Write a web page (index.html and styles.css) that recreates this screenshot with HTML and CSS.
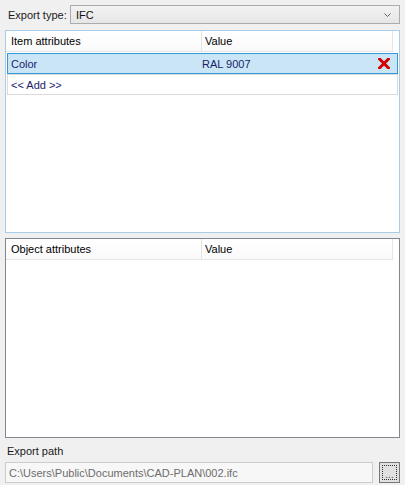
FILE: index.html
```html
<!DOCTYPE html>
<html>
<head>
<meta charset="utf-8">
<link rel="stylesheet" href="styles.css">
</head>
<body>
<div class="panel">
  <div class="type-row">
    <span class="label">Export type:</span>
    <div class="combo">
      <span class="combo-text">IFC</span>
      <svg class="chev" width="7" height="4" viewBox="0 0 7 4"><path d="M0.5 0.5 L3.5 3.5 L6.5 0.5" fill="none" stroke="#606060" stroke-width="1"/></svg>
    </div>
  </div>

  <div class="list list-focused">
    <div class="list-head">
      <div class="col col1">Item attributes</div>
      <div class="col col2">Value</div>
    </div>
    <div class="row row-sel">
      <div class="cell c1">Color</div>
      <div class="cell c2">RAL 9007</div>
      <svg class="del" width="12" height="11" viewBox="0 0 12 11"><path d="M1.5 1 L10.5 10 M10.5 1 L1.5 10" stroke="#d40000" stroke-width="3" stroke-linecap="square"/></svg>
    </div>
    <div class="row row-add">
      <div class="cell c1">&lt;&lt; Add &gt;&gt;</div>
    </div>
  </div>

  <div class="list list-plain">
    <div class="list-head">
      <div class="col col1">Object attributes</div>
      <div class="col col2">Value</div>
    </div>
  </div>

  <div class="path-label">Export path</div>
  <div class="path-row">
    <div class="path-box">C:\Users\Public\Documents\CAD-PLAN\002.ifc</div>
    <div class="browse"><div class="focus-rect"><span class="dots">...</span></div></div>
  </div>
</div>
</body>
</html>
```

FILE: styles.css
```css
html, body {
  margin: 0;
  padding: 0;
  background: #f0f0f0;
}
body {
  font-family: "Liberation Sans", Arial, sans-serif;
  font-size: 11px;
  color: #000;
  width: 405px;
  height: 485px;
  overflow: hidden;
}
.panel {
  padding: 5px 5px 0 5px;
  display: flex;
  flex-direction: column;
}
.type-row {
  display: flex;
  align-items: center;
  height: 19px;
}
.label {
  margin-left: 3px;
  width: 62px;
  color: #1a1a1a;
}
.combo {
  flex: 1;
  height: 17px;
  border: 1px solid #acacac;
  background: linear-gradient(#f2f2f2, #e6e6e6);
  display: flex;
  align-items: center;
  justify-content: space-between;
  padding: 0 8px 0 5px;
}
.combo-text { color: #111; }
.chev { margin-top: 1px; }

.list {
  background: #fff;
  display: flex;
  flex-direction: column;
  position: relative;
}
.list-focused {
  margin-top: 6px;
  height: 201px;
  border: 1px solid #a9cde8;
}
.list-plain {
  margin-top: 5px;
  height: 198px;
  border: 1px solid #828790;
}
.list-head {
  display: flex;
  height: 20px;
  margin-right: 6px;
  border-bottom: 1px solid #e5e5e5;
  border-right: 1px solid #e5e5e5;
  background: linear-gradient(#ffffff, #fafafa);
}
.col {
  display: flex;
  align-items: center;
  padding-left: 5px;
}
.col1 {
  width: 190px;
  border-right: 1px solid #e5e5e5;
}
.col2 { flex: 1; padding-left: 3px; }

.row {
  display: flex;
  align-items: center;
  height: 19px;
  margin: 0 1px;
  position: relative;
  color: #1c1c6a;
}
.row-sel {
  margin-top: 1px;
  background: #cae6f6;
  border: 1px solid #3399d8;
}
.row-add {
  border: 1px solid #dadada;
}
.cell.c1 {
  width: 191px;
  padding-left: 3px;
}
.cell.c2 { flex: 1; }
.del {
  margin-right: 7px;
}

.path-label {
  margin-top: 5px;
  margin-left: 2px;
  height: 16px;
  line-height: 16px;
  color: #1a1a1a;
}
.path-row {
  display: flex;
  margin-top: 3px;
  height: 21px;
}
.path-box {
  width: 368px;
  border: 1px solid #cccccc;
  background: #f7f7f7;
  color: #6d6d6d;
  display: flex;
  align-items: center;
  padding-left: 3px;
  box-sizing: border-box;
  height: 21px;
}
.browse {
  margin-left: 6px;
  width: 21px;
  height: 21px;
  box-sizing: border-box;
  border: 1px solid #777;
  background: #e1e1e1;
  padding: 2px;
}
.focus-rect {
  width: 100%;
  height: 100%;
  box-sizing: border-box;
  border: 1px dotted #333;
  display: flex;
  align-items: flex-end;
  justify-content: center;
}
.dots {
  font-size: 10px;
  line-height: 9px;
  color: #555;
}
```
